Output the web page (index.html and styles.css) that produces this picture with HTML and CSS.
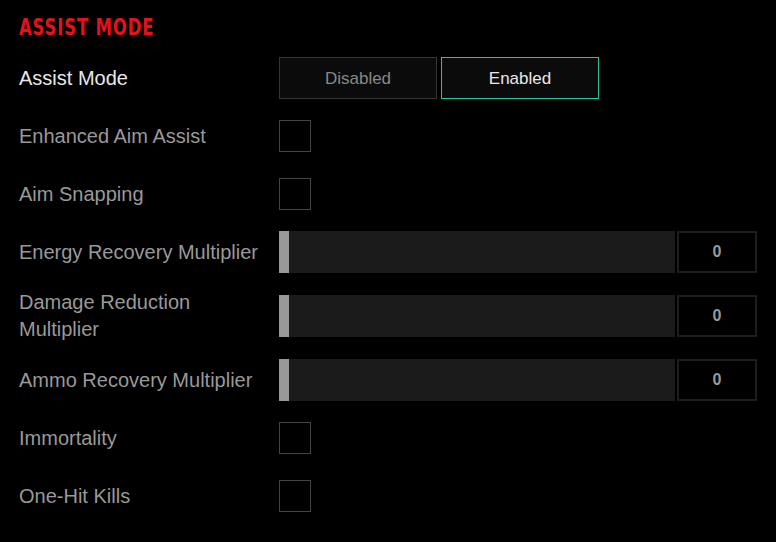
FILE: index.html
```html
<!DOCTYPE html>
<html>
<head>
<meta charset="utf-8">
<link rel="stylesheet" href="styles.css">
</head>
<body>
<div class="panel">
  <h1 class="title"><span class="title-text">ASSIST MODE</span></h1>
  <div class="row">
    <div class="label label-active">Assist Mode</div>
    <div class="control">
      <div class="toggle">
        <button class="opt">Disabled</button>
        <button class="opt opt-on">Enabled</button>
      </div>
    </div>
  </div>
  <div class="row">
    <div class="label">Enhanced Aim Assist</div>
    <div class="control"><span class="check"></span></div>
  </div>
  <div class="row">
    <div class="label">Aim Snapping</div>
    <div class="control"><span class="check"></span></div>
  </div>
  <div class="row">
    <div class="label">Energy Recovery Multiplier</div>
    <div class="control slider">
      <div class="track"><span class="thumb"></span></div>
      <div class="value">0</div>
    </div>
  </div>
  <div class="row">
    <div class="label">Damage Reduction<br>Multiplier</div>
    <div class="control slider">
      <div class="track"><span class="thumb"></span></div>
      <div class="value">0</div>
    </div>
  </div>
  <div class="row">
    <div class="label">Ammo Recovery Multiplier</div>
    <div class="control slider">
      <div class="track"><span class="thumb"></span></div>
      <div class="value">0</div>
    </div>
  </div>
  <div class="row">
    <div class="label">Immortality</div>
    <div class="control"><span class="check"></span></div>
  </div>
  <div class="row">
    <div class="label">One-Hit Kills</div>
    <div class="control"><span class="check"></span></div>
  </div>
</div>
</body>
</html>
```
FILE: styles.css
```css
html, body {
  margin: 0;
  padding: 0;
  background: #000;
}
.panel {
  width: 776px;
  height: 542px;
  box-sizing: border-box;
  padding: 0 19px;
  font-family: "Liberation Sans", Arial, sans-serif;
  overflow: hidden;
}
.title {
  margin: 0;
  height: 49px;
  box-sizing: border-box;
  padding-top: 14px;
  font-family: "DejaVu Sans", sans-serif;
  font-stretch: condensed;
  font-weight: bold;
  font-size: 23px;
  line-height: 27px;
  color: #e3121b;
}
.title-text {
  display: inline-block;
  letter-spacing: 1px;
  transform: scaleX(0.8);
  transform-origin: left center;
}
.row {
  display: flex;
  align-items: center;
  min-height: 58px;
  padding: 8px 0;
  box-sizing: border-box;
}
.label {
  width: 260px;
  flex: none;
  font-size: 20px;
  line-height: 27px;
  color: #999;
}
.label-active {
  color: #e8e8e8;
}
.control {
  flex: 1;
  display: flex;
  align-items: center;
}
.toggle {
  display: flex;
  gap: 4px;
}
.opt {
  width: 158px;
  height: 42px;
  box-sizing: border-box;
  background: #0b0b0b;
  border: 1px solid #363636;
  color: #888;
  font-family: "Liberation Sans", Arial, sans-serif;
  font-size: 17px;
  padding: 2px 0 0;
}
.opt-on {
  border-color: #1fc9a2;
  color: #e8e8e8;
}
.check {
  width: 32px;
  height: 32px;
  box-sizing: border-box;
  border: 1px solid #444;
  background: #000;
}
.slider {
  gap: 2px;
}
.track {
  width: 396px;
  height: 42px;
  background: #1b1b1b;
  display: flex;
}
.thumb {
  width: 10px;
  height: 42px;
  background: #999;
}
.value {
  width: 80px;
  height: 42px;
  box-sizing: border-box;
  border: 2px solid #1e1e1e;
  background: #000;
  color: #999;
  font-weight: bold;
  font-size: 16px;
  display: flex;
  align-items: center;
  justify-content: center;
}
```
